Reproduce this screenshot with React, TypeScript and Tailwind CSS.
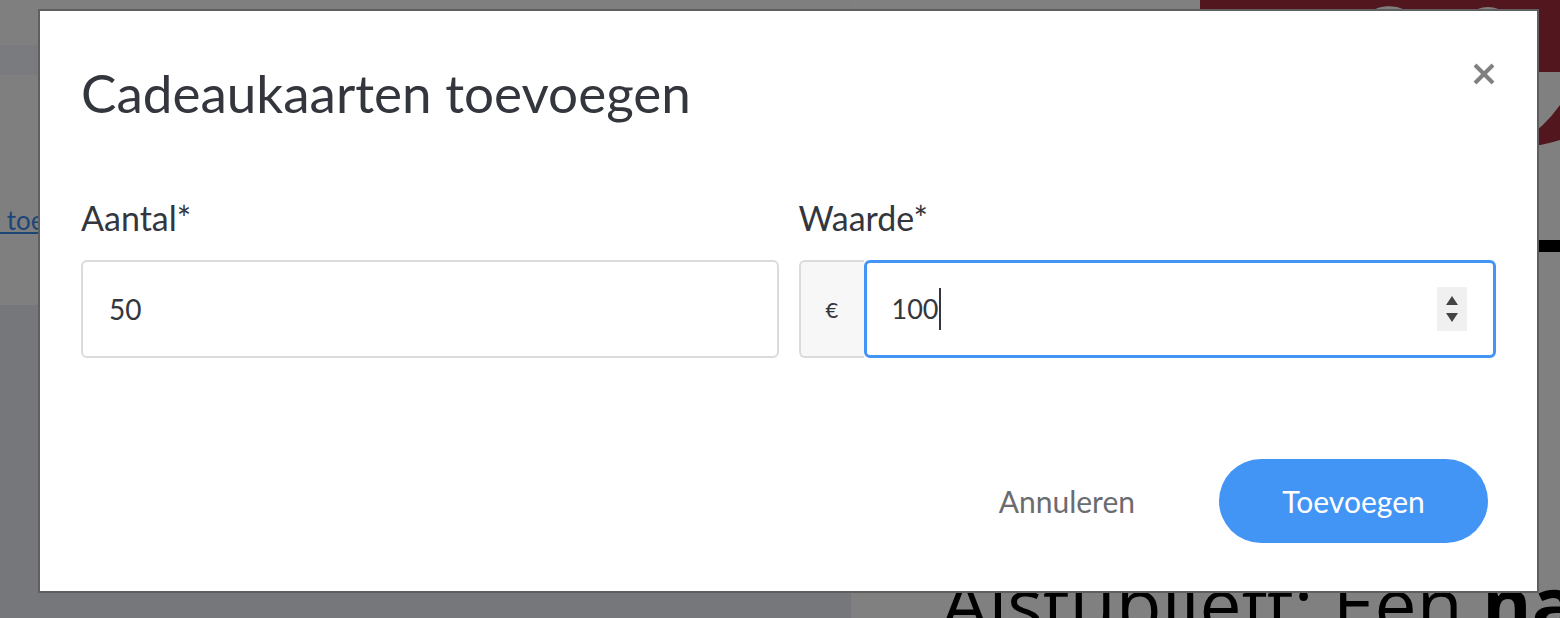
const font = { fontFamily: "Lato, 'Noto Sans', sans-serif" };

function Backdrop() {
  return (
    <div className="flex h-[618px] w-full overflow-hidden bg-[#808080]">
      {/* left column of the page under the overlay */}
      <div className="flex w-[851px] shrink-0 flex-col">
        <div className="h-[45px] bg-[#7f7f7f]" />
        <div className="h-[30px] bg-[#797b7e]" />
        <div className="flex h-[230px] items-center bg-[#7f7f7f]">
          <span className="mt-[60px] text-[26px] text-[#1d4678] underline" style={font}>
            &nbsp;toe
          </span>
        </div>
        <div className="flex-1 bg-[#76777a]" />
      </div>
      {/* right column */}
      <div className="relative flex-1 bg-[#808080]">
        <svg className="absolute left-[349px] top-0" width="360" height="160" viewBox="0 0 360 160">
          <rect x="0" y="0" width="360" height="72" fill="#52161e" />
          <ellipse cx="180" cy="60" rx="42" ry="56" transform="rotate(25 180 60)" fill="#808080" />
          <circle cx="288" cy="34" r="27" fill="#808080" />
          <path d="M300 150 Q335 140 360 105 L360 160 L300 160 Z" fill="#52161e" />
          <path d="M300 150 Q335 148 360 140 L360 160 L300 160 Z" fill="#808080" />
        </svg>
        <div className="absolute left-[686px] top-[240px] h-[12px] w-[30px] bg-black" />
        <div
          className="absolute left-[90px] top-[566px] whitespace-nowrap text-[75px] leading-none text-black"
          style={{ fontFamily: "'Open Sans', sans-serif" }}
        >
          Alstublieft: Een <b>nat</b>
        </div>
      </div>
    </div>
  );
}

function Field({ label, children }: { label: string; children: React.ReactNode }) {
  return (
    <div className="flex flex-1 flex-col">
      <label className="mb-[22px] text-[34px] leading-[40px] text-[#33363d]">{label}</label>
      {children}
    </div>
  );
}

export default function App() {
  return (
    <div className="relative h-[618px] w-[1560px] overflow-hidden" style={font}>
      <Backdrop />

      {/* modal */}
      <div className="absolute left-[38px] top-[9px] flex h-[584px] w-[1501px] flex-col border-2 border-[#5f5f5f] bg-white px-[41px]">
        <div className="flex items-start justify-between pt-[52px]">
          <h2 className="text-[53px] font-normal leading-[60px] text-[#33363d]">Cadeaukaarten toevoegen</h2>
          <button className="mr-[1px] mt-[0px] text-[#808080]">
            <svg width="22" height="22" viewBox="0 0 22 22">
              <path d="M2 2 L20 20 M20 2 L2 20" stroke="currentColor" strokeWidth="4" />
            </svg>
          </button>
        </div>

        <div className="mt-[75px] flex gap-[20px]">
          <Field label="Aantal*">
            <div className="flex h-[98px] items-center rounded-[6px] border-2 border-[#dbdbdb] pl-[26px] text-[28px] text-[#33363d]">
              50
            </div>
          </Field>
          <Field label="Waarde*">
            <div className="flex h-[98px]">
              <div className="flex w-[65px] items-center justify-center rounded-l-[6px] border-2 border-r-0 border-[#dbdbdb] bg-[#f7f7f7] text-[22px] text-[#33363d]">
                €
              </div>
              <div className="flex flex-1 items-center rounded-[6px] border-[3px] border-[#4395f5] pl-[25px] pr-[26px] text-[27px] text-[#33363d]">
                <span>100</span>
                <span className="ml-[1px] h-[42px] w-[2px] bg-[#33363d]" />
                <div className="ml-auto flex h-[44px] w-[30px] flex-col items-center justify-center gap-[8px] bg-[#f0f0f0]">
                  <svg width="12" height="9" viewBox="0 0 12 9"><path d="M6 0 L12 9 L0 9 Z" fill="#444" /></svg>
                  <svg width="12" height="9" viewBox="0 0 12 9"><path d="M0 0 L12 0 L6 9 Z" fill="#444" /></svg>
                </div>
              </div>
            </div>
          </Field>
        </div>

        <div className="mt-auto mb-[48px] flex items-center justify-end gap-[84px] pr-[8px]">
          <button className="text-[30px] text-[#6b6c70]">Annuleren</button>
          <button className="h-[84px] w-[269px] rounded-full bg-[#4395f5] text-[30px] text-white">Toevoegen</button>
        </div>
      </div>
    </div>
  );
}
